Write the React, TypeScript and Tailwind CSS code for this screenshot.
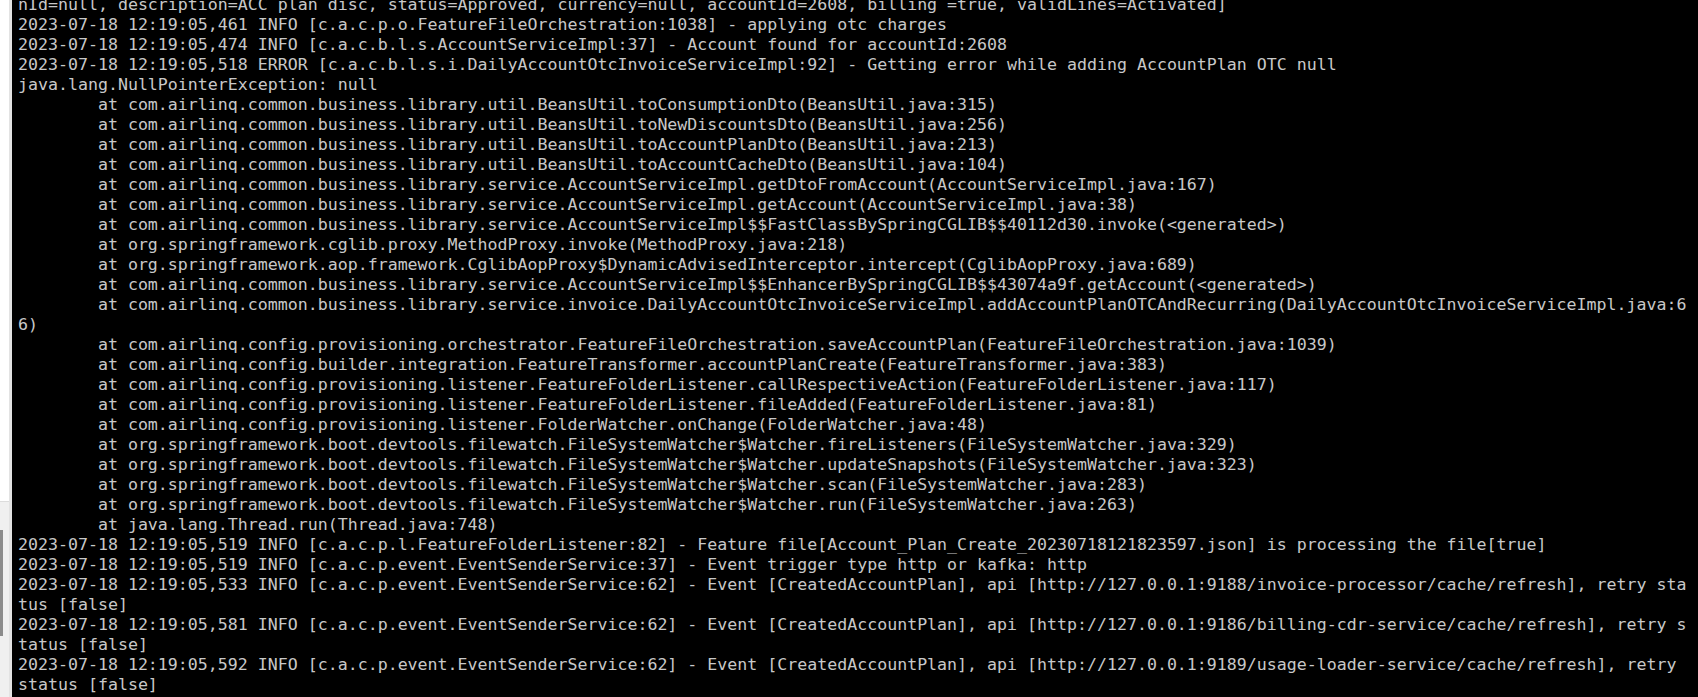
const T = "        at ";

// log output as it sits in the terminal buffer (already wrapped at 167 cols)
const lines: string[] = [
  "nId=null, description=ACC plan disc, status=Approved, currency=null, accountId=2608, billing =true, validLines=Activated]",
  "2023-07-18 12:19:05,461 INFO [c.a.c.p.o.FeatureFileOrchestration:1038] - applying otc charges",
  "2023-07-18 12:19:05,474 INFO [c.a.c.b.l.s.AccountServiceImpl:37] - Account found for accountId:2608",
  "2023-07-18 12:19:05,518 ERROR [c.a.c.b.l.s.i.DailyAccountOtcInvoiceServiceImpl:92] - Getting error while adding AccountPlan OTC null",
  "java.lang.NullPointerException: null",
  T + "com.airlinq.common.business.library.util.BeansUtil.toConsumptionDto(BeansUtil.java:315)",
  T + "com.airlinq.common.business.library.util.BeansUtil.toNewDiscountsDto(BeansUtil.java:256)",
  T + "com.airlinq.common.business.library.util.BeansUtil.toAccountPlanDto(BeansUtil.java:213)",
  T + "com.airlinq.common.business.library.util.BeansUtil.toAccountCacheDto(BeansUtil.java:104)",
  T + "com.airlinq.common.business.library.service.AccountServiceImpl.getDtoFromAccount(AccountServiceImpl.java:167)",
  T + "com.airlinq.common.business.library.service.AccountServiceImpl.getAccount(AccountServiceImpl.java:38)",
  T + "com.airlinq.common.business.library.service.AccountServiceImpl$$FastClassBySpringCGLIB$$40112d30.invoke(<generated>)",
  T + "org.springframework.cglib.proxy.MethodProxy.invoke(MethodProxy.java:218)",
  T + "org.springframework.aop.framework.CglibAopProxy$DynamicAdvisedInterceptor.intercept(CglibAopProxy.java:689)",
  T + "com.airlinq.common.business.library.service.AccountServiceImpl$$EnhancerBySpringCGLIB$$43074a9f.getAccount(<generated>)",
  T + "com.airlinq.common.business.library.service.invoice.DailyAccountOtcInvoiceServiceImpl.addAccountPlanOTCAndRecurring(DailyAccountOtcInvoiceServiceImpl.java:6",
  "6)",
  T + "com.airlinq.config.provisioning.orchestrator.FeatureFileOrchestration.saveAccountPlan(FeatureFileOrchestration.java:1039)",
  T + "com.airlinq.config.builder.integration.FeatureTransformer.accountPlanCreate(FeatureTransformer.java:383)",
  T + "com.airlinq.config.provisioning.listener.FeatureFolderListener.callRespectiveAction(FeatureFolderListener.java:117)",
  T + "com.airlinq.config.provisioning.listener.FeatureFolderListener.fileAdded(FeatureFolderListener.java:81)",
  T + "com.airlinq.config.provisioning.listener.FolderWatcher.onChange(FolderWatcher.java:48)",
  T + "org.springframework.boot.devtools.filewatch.FileSystemWatcher$Watcher.fireListeners(FileSystemWatcher.java:329)",
  T + "org.springframework.boot.devtools.filewatch.FileSystemWatcher$Watcher.updateSnapshots(FileSystemWatcher.java:323)",
  T + "org.springframework.boot.devtools.filewatch.FileSystemWatcher$Watcher.scan(FileSystemWatcher.java:283)",
  T + "org.springframework.boot.devtools.filewatch.FileSystemWatcher$Watcher.run(FileSystemWatcher.java:263)",
  T + "java.lang.Thread.run(Thread.java:748)",
  "2023-07-18 12:19:05,519 INFO [c.a.c.p.l.FeatureFolderListener:82] - Feature file[Account_Plan_Create_20230718121823597.json] is processing the file[true]",
  "2023-07-18 12:19:05,519 INFO [c.a.c.p.event.EventSenderService:37] - Event trigger type http or kafka: http",
  "2023-07-18 12:19:05,533 INFO [c.a.c.p.event.EventSenderService:62] - Event [CreatedAccountPlan], api [http://127.0.0.1:9188/invoice-processor/cache/refresh], retry sta",
  "tus [false]",
  "2023-07-18 12:19:05,581 INFO [c.a.c.p.event.EventSenderService:62] - Event [CreatedAccountPlan], api [http://127.0.0.1:9186/billing-cdr-service/cache/refresh], retry s",
  "tatus [false]",
  "2023-07-18 12:19:05,592 INFO [c.a.c.p.event.EventSenderService:62] - Event [CreatedAccountPlan], api [http://127.0.0.1:9189/usage-loader-service/cache/refresh], retry",
  "status [false]",
];

export default function App() {
  return (
    <main className="flex h-[697px] w-full overflow-hidden bg-black">
      {/* sliver of the side panel on the left */}
      <div className="flex w-[9px] shrink-0 flex-col">
        <div className="h-[501px] bg-white" />
        <div className="flex-1 border-t border-[#dcdcdc] bg-[#f0f0f0] pt-[28px]">
          <div className="h-[106px] w-[3px] bg-[#8c8c8c]" />
        </div>
      </div>
      <div className="w-[3px] shrink-0 bg-[#e3e3e3]" />

      {/* terminal */}
      <div className="flex-1 overflow-hidden pl-[6px]">
        <div
          className="-mt-[5px] text-[16.6px] leading-[20px] text-[#c8c8c8]"
          style={{ fontFamily: '"DejaVu Sans Mono", monospace' }}
        >
          {lines.map((line, i) => (
            <div key={i} className="h-[20px] whitespace-pre">
              {line}
            </div>
          ))}
        </div>
      </div>
    </main>
  );
}
